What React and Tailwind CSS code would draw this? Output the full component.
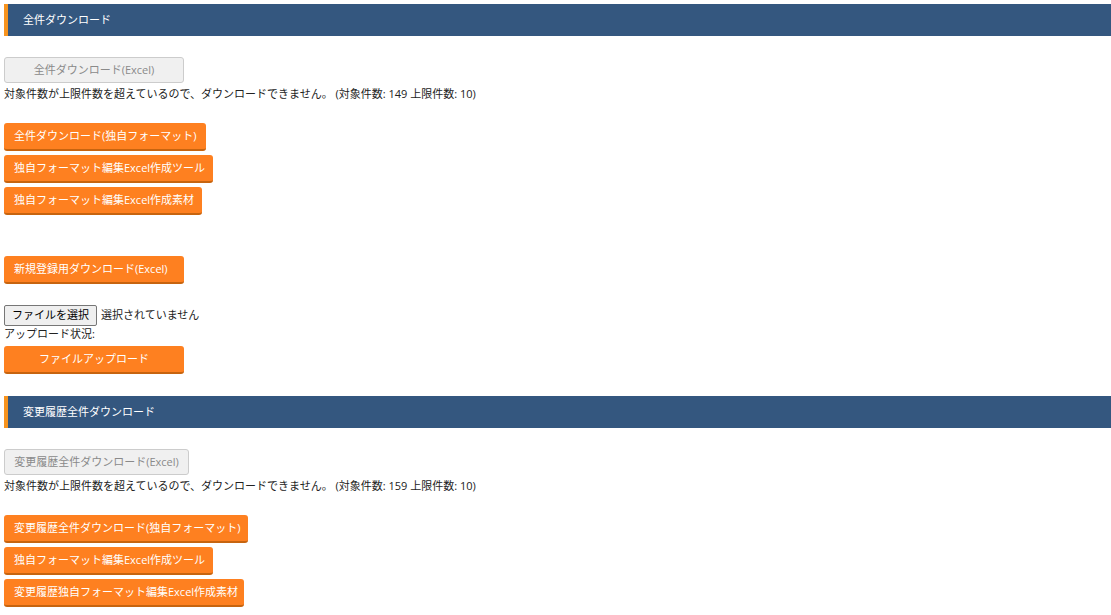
const font = {
  fontFamily: '"Open Sans", "Noto Sans CJK JP", sans-serif',
};

function SectionHeader({ title, className = "" }) {
  return (
    <div
      className={`h-[32px] bg-[#34577f] border-l-4 border-[#f7931e] pl-[15px] flex items-center text-white text-[11px] ${className}`}
    >
      {title}
    </div>
  );
}

function DisabledButton({ label, width, className = "" }) {
  return (
    <button
      disabled
      className={`h-[26px] ${width} rounded-[3px] border border-[#cccccc] bg-[#f0f0f0] text-[#8a8a8a] text-[11px] text-center block ${className}`}
    >
      {label}
    </button>
  );
}

function OrangeButton({ label, width, center = false, className = "" }) {
  return (
    <button
      className={`h-[28px] ${width} rounded-[3px] bg-[#fe8020] border-b-2 border-[#c7640f] text-white text-[11px] block ${
        center ? "text-center" : "text-left pl-[10px]"
      } ${className}`}
    >
      {label}
    </button>
  );
}

function LimitNote({ count }) {
  return (
    <p className="mt-[3px] leading-[16px] text-[11px] text-[#222]">
      対象件数が上限件数を超えているので、ダウンロードできません。 (対象件数: {count} 上限件数: 10)
    </p>
  );
}

export default function App() {
  return (
    <div className="bg-white min-h-[615px] pl-[4px] pt-[4px]" style={font}>
      <SectionHeader title="全件ダウンロード" />

      <DisabledButton label="全件ダウンロード(Excel)" width="w-[180px]" className="mt-[21px]" />
      <LimitNote count={149} />

      <div className="mt-[21px] flex flex-col gap-[4px]">
        <OrangeButton label="全件ダウンロード(独自フォーマット)" width="w-[202px]" />
        <OrangeButton label="独自フォーマット編集Excel作成ツール" width="w-[209px]" />
        <OrangeButton label="独自フォーマット編集Excel作成素材" width="w-[198px]" />
      </div>

      <OrangeButton
        label="新規登録用ダウンロード(Excel)"
        width="w-[180px]"
        className="mt-[41px]"
      />

      <div className="mt-[21px] flex items-center gap-[4px] h-[21px] text-[11px] text-[#222]">
        <span className="h-[21px] px-[7px] flex items-center border border-[#767676] rounded-[2px] bg-[#efefef] text-black">
          ファイルを選択
        </span>
        <span>選択されていません</span>
      </div>
      <p className="leading-[16px] text-[11px] text-[#222]">アップロード状況:</p>
      <OrangeButton
        label="ファイルアップロード"
        width="w-[180px]"
        center
        className="mt-[4px]"
      />

      <SectionHeader title="変更履歴全件ダウンロード" className="mt-[22px]" />

      <DisabledButton
        label="変更履歴全件ダウンロード(Excel)"
        width="w-[185px]"
        className="mt-[21px]"
      />
      <LimitNote count={159} />

      <div className="mt-[21px] flex flex-col gap-[4px]">
        <OrangeButton label="変更履歴全件ダウンロード(独自フォーマット)" width="w-[244px]" />
        <OrangeButton label="独自フォーマット編集Excel作成ツール" width="w-[209px]" />
        <OrangeButton label="変更履歴独自フォーマット編集Excel作成素材" width="w-[240px]" />
      </div>
    </div>
  );
}
